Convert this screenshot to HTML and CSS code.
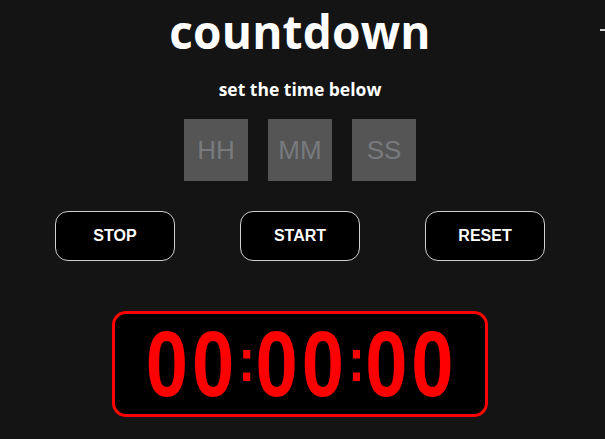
FILE: index.html
```html
<!DOCTYPE html>
<html lang="en">
<head>
<meta charset="utf-8">
<title>countdown</title>
<link rel="stylesheet" href="styles.css">
</head>
<body>
<div class="page">
  <h1 class="title">countdown</h1>
  <p class="subtitle">set the time below</p>
  <div class="inputs">
    <input class="field" type="text" placeholder="HH">
    <input class="field" type="text" placeholder="MM">
    <input class="field" type="text" placeholder="SS">
  </div>
  <div class="buttons">
    <button class="btn">STOP</button>
    <button class="btn">START</button>
    <button class="btn">RESET</button>
  </div>
  <div class="display"><span class="digits">00<span class="colon">:</span>00<span class="colon">:</span>00</span></div>
</div>
<div class="edge"></div>
</body>
</html>
```
FILE: styles.css
```css
html, body {
  margin: 0;
  padding: 0;
  background: #141414;
  overflow: hidden;
}
body {
  width: 605px;
  height: 439px;
  position: relative;
}
.page {
  width: 600px;
  display: flex;
  flex-direction: column;
  align-items: center;
}
.title {
  margin: 3px 0 0;
  font-family: "Open Sans", "DejaVu Sans", sans-serif;
  font-weight: 700;
  font-size: 46px;
  line-height: 56px;
  color: #fff;
  letter-spacing: 0.2px;
}
.subtitle {
  margin: 18px 0 0;
  font-family: "Open Sans", "DejaVu Sans", sans-serif;
  font-weight: 700;
  font-size: 17.5px;
  line-height: 24px;
  color: #fff;
}
.inputs {
  margin-top: 18px;
  display: flex;
  gap: 20px;
}
.field {
  width: 64px;
  height: 62px;
  box-sizing: border-box;
  border: none;
  outline: none;
  padding: 0;
  background: #555555;
  color: #ddd;
  text-align: center;
  font-family: "Liberation Sans", Arial, sans-serif;
  font-size: 26px;
}
.field::placeholder {
  color: #787a7d;
}
.buttons {
  margin-top: 30px;
  display: flex;
  gap: 65px;
}
.btn {
  width: 120px;
  height: 50px;
  box-sizing: border-box;
  background: #000;
  color: #fff;
  border: 1px solid #cfcfcf;
  border-radius: 13px;
  font-family: "Liberation Sans", Arial, sans-serif;
  font-weight: 700;
  font-size: 16px;
  padding: 0;
}
.display {
  margin-top: 50px;
  width: 376px;
  height: 106px;
  box-sizing: border-box;
  border: 3px solid #ff0000;
  border-radius: 14px;
  background: #000;
  display: flex;
  align-items: center;
  justify-content: center;
}
.digits {
  font-family: "Liberation Sans", Arial, sans-serif;
  font-weight: 700;
  font-size: 66px;
  line-height: 50px;
  color: #ff0000;
  letter-spacing: 3.5px;
  display: inline-block;
  margin-right: -3.5px;
  transform: scale(1.15, 1.4);
}
.colon {
  display: inline-block;
  width: 15px;
  text-align: center;
  letter-spacing: 0;
  font-size: 44px;
  line-height: 30px;
  vertical-align: 11px;
}
.edge {
  position: absolute;
  right: 0;
  top: 29px;
  width: 5px;
  height: 2px;
  background: #cfcfcf;
}
```
